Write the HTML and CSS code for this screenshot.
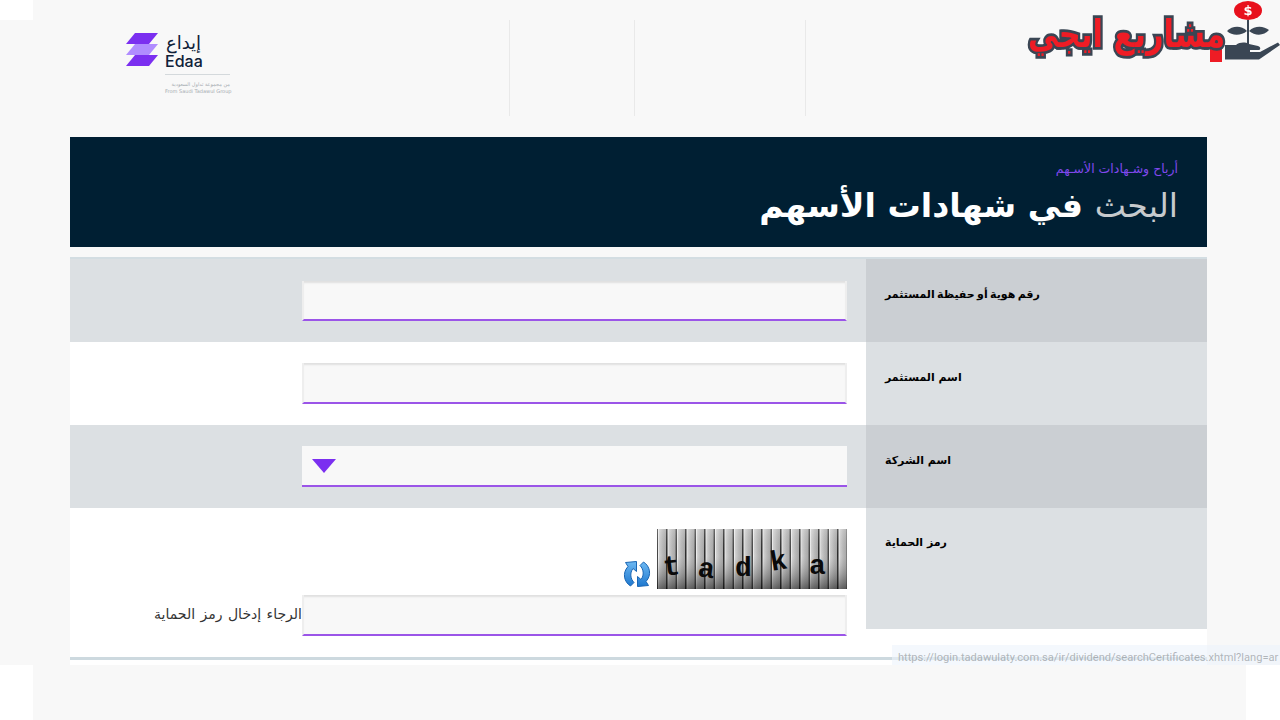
FILE: index.html
```html
<!DOCTYPE html>
<html lang="ar">
<head>
    <meta charset="UTF-8">
    <meta name="viewport" content="width=device-width, initial-scale=1.0">
    <title>البحث في شهادات الأسهم</title>
    <link rel="stylesheet" href="styles.css">
</head>
<body>
    <div class="top-strip"></div>

    <main class="page">
        <header class="header">
            <div class="edaa-logo">
                <svg class="edaa-mark" width="32" height="34" viewBox="0 0 32 34">
                    <polygon points="0,11 9,0 32,0 23,11" fill="#7b2ff0"/>
                    <polygon points="0,22 9,11 32,11 23,22" fill="#b08cff"/>
                    <polygon points="0,33 9,22 32,22 23,33" fill="#7b2ff0"/>
                </svg>
                <div class="edaa-text">
                    <div class="edaa-ar">إيداع</div>
                    <div class="edaa-en">Edaa</div>
                    <div class="edaa-group">
                        <div>من مجموعة تداول السعودية</div>
                        <div>From Saudi Tadawul Group</div>
                    </div>
                </div>
            </div>
            <nav class="nav">
                <div class="nav-item nav-first"></div>
                <div class="nav-item nav-second"></div>
            </nav>
        </header>

        <div class="site-logo">
            <span class="site-logo-block"></span>
            <span class="site-logo-text">مشاريع ايجي</span>
            <svg class="site-logo-icon" width="58" height="62" viewBox="0 0 58 62">
                <ellipse cx="26" cy="10.5" rx="14" ry="9.5" fill="#e8101c"/>
                <text x="26" y="15" class="dollar">$</text>
                <path d="M26 20V44" stroke="#3a4654" stroke-width="2"/>
                <path d="M25 31C19 25 10 26 5 31C10 36 19 36 25 31Z" fill="#3a4654"/>
                <path d="M27 31C33 25 42 26 47 30C42 36 33 36 27 31Z" fill="#3a4654"/>
                <path d="M3 45L14 45C18 42 23 42 27 44L36 46C39 47 39 50 36 50L28 50L28 52L38 52L56 42.5L58 45L37 59.5H3Z" fill="#3a4654"/>
            </svg>
        </div>

        <section class="banner">
            <div class="banner-sub">أرباح وشـهادات الأسـهم</div>
            <h1 class="banner-title"><span class="light">البحث</span> في شهادات الأسهم</h1>
        </section>

        <section class="form">
            <div class="row row-dark">
                <div class="label label-long">رقم هوية أو حفيظة المستثمر</div>
                <div class="field"><input class="input" type="text"></div>
            </div>
            <div class="row">
                <div class="label">اسم المستثمر</div>
                <div class="field field-tall"><input class="input" type="text"></div>
            </div>
            <div class="row row-dark">
                <div class="label">اسم الشركة</div>
                <div class="field field-tall">
                    <div class="select"><span class="select-arrow"></span></div>
                </div>
            </div>
            <div class="row row-captcha">
                <div class="label">رمز الحماية</div>
                <div class="field field-tall">
                    <div class="captcha-line">
                        <svg class="captcha" width="190" height="60" viewBox="0 0 190 60">
                            <defs>
                                <linearGradient id="stripes" x1="0" x2="0.05" y1="0" y2="0" spreadMethod="repeat">
                                    <stop offset="0" stop-color="#2c2c2c"/>
                                    <stop offset="0.09" stop-color="#555"/>
                                    <stop offset="0.14" stop-color="#f2f2f2"/>
                                    <stop offset="0.26" stop-color="#d0d0d0"/>
                                    <stop offset="0.6" stop-color="#b8b8b8"/>
                                    <stop offset="0.92" stop-color="#a8a8a8"/>
                                    <stop offset="1" stop-color="#2c2c2c"/>
                                </linearGradient>
                                <linearGradient id="shade" x1="0" x2="0" y1="0" y2="1">
                                    <stop offset="0" stop-color="#fff" stop-opacity=".2"/>
                                    <stop offset="0.45" stop-color="#888" stop-opacity="0"/>
                                    <stop offset="1" stop-color="#000" stop-opacity=".5"/>
                                </linearGradient>
                            </defs>
                            <rect width="190" height="60" fill="url(#stripes)"/>
                            <rect width="190" height="60" fill="url(#shade)"/>
                            <text x="6" y="46" class="captcha-char" transform="rotate(-6 14 36)">t</text>
                            <text x="41" y="48" class="captcha-char" transform="rotate(8 48 40)">a</text>
                            <text x="78" y="47" class="captcha-char">d</text>
                            <text x="113" y="41" class="captcha-char" transform="rotate(-10 120 32)">k</text>
                            <text x="152" y="45" class="captcha-char">a</text>
                        </svg>
                        <svg class="refresh" width="28" height="28" viewBox="0 0 28 28">
                            <defs>
                                <linearGradient id="arrowBlue" x1="0" x2="0" y1="0" y2="1">
                                    <stop offset="0" stop-color="#6db8f2"/>
                                    <stop offset="1" stop-color="#1e78cf"/>
                                </linearGradient>
                            </defs>
                            <path d="M7.5 26C1 22-1 13 5 6.5L2.5 2.5L13.5 1.5L13.5 11.5L10 8.5C6.5 13 7.5 19 11 22.5Z" fill="url(#arrowBlue)" stroke="#1a66b4"/>
                            <path d="M20.5 2C27 6 29 15 23 21.5L25.5 25.5L14.5 26.5L14.5 16.5L18 19.5C21.5 15 20.5 9 17 5.5Z" fill="url(#arrowBlue)" stroke="#1a66b4"/>
                        </svg>
                    </div>
                    <div class="input-line">
                        <input class="input" type="text">
                        <span class="error">الرجاء إدخال رمز الحماية</span>
                    </div>
                </div>
            </div>
        </section>

        <div class="status-url">https://login.tadawulaty.com.sa/ir/dividend/searchCertificates.xhtml?lang=ar</div>
    </main>

    <div class="bottom-strip"></div>
</body>
</html>
```

FILE: styles.css
```css
* {
    margin: 0;
    padding: 0;
    box-sizing: border-box;
}

html, body {
    height: 720px;
    overflow: hidden;
}

body {
    background: #fff;
    font-family: "DejaVu Sans", sans-serif;
}

.top-strip {
    height: 20px;
    margin-left: 33px;
    background: #f8f8f8;
}

.bottom-strip {
    height: 55px;
    margin: 0 34px 0 33px;
    background: #f8f8f8;
}

.page {
    position: relative;
    height: 645px;
    background: #f8f8f8;
}

/* header */
.header {
    display: flex;
    height: 117px;
    padding-left: 126px;
}

.edaa-logo {
    display: flex;
    gap: 7px;
    width: 383px;
    padding-top: 13px;
}

.edaa-ar {
    font-size: 18px;
    line-height: 19px;
    color: #0f2138;
    width: 37px;
    text-align: center;
}

.edaa-en {
    margin-top: 2px;
    font-family: "Inter", sans-serif;
    font-size: 16px;
    font-weight: 500;
    line-height: 15px;
    color: #0f2138;
}

.edaa-group {
    width: 65px;
    margin-top: 5px;
    padding-top: 6px;
    border-top: 1px solid #d4d9dc;
    font-size: 5px;
    line-height: 7px;
    color: #a5abb0;
    white-space: nowrap;
}

.edaa-group div:first-child {
    direction: rtl;
}

.nav {
    display: flex;
    height: 96px;
}

.nav-item {
    border-left: 1px solid #e9e9e9;
}

.nav-first {
    width: 125px;
}

.nav-second {
    width: 172px;
    border-right: 1px solid #e9e9e9;
}

/* logo over the corner of the header */
.site-logo {
    position: absolute;
    top: -20px;
    right: 0;
    display: flex;
    align-items: flex-start;
    filter: blur(0.4px);
}

.site-logo-text {
    margin-top: 7px;
    margin-right: -3px;
    font-size: 34px;
    font-weight: bold;
    line-height: 54px;
    color: #ee1c25;
    -webkit-text-stroke: 5px #3a4654;
    paint-order: stroke fill;
    white-space: nowrap;
    transform: scale(0.9, 1.12);
    transform-origin: right center;
}

.site-logo-block {
    position: absolute;
    top: 45px;
    right: 58px;
    width: 12px;
    height: 17px;
    background: #ee1c25;
}

.dollar {
    font-size: 13px;
    font-weight: bold;
    fill: #fff;
    text-anchor: middle;
}

/* banner */
.banner {
    margin: 0 73px 0 70px;
    height: 110px;
    padding: 23px 29px 0;
    background: #001f33;
    direction: rtl;
}

.banner-sub {
    font-size: 12.5px;
    line-height: 18px;
    color: #8048ee;
}

.banner-title {
    margin-top: 7px;
    font-size: 33.2px;
    font-weight: bold;
    line-height: 42px;
    color: #fff;
}

.banner-title .light {
    font-weight: normal;
    color: #c6cacd;
}

/* form */
.form {
    margin: 10px 73px 0 70px;
    height: 408px;
    padding-bottom: 5px;
    background: #fff;
    border-top: 2px solid #d3dde2;
    direction: rtl;
}

.form::after {
    content: "";
    display: block;
    height: 3px;
    margin-top: 28px;
    background: #cdd9df;
}

.row {
    display: flex;
    height: 83px;
}

.row-dark {
    background: #dce0e3;
}

.label {
    width: 341px;
    flex-shrink: 0;
    padding: 27px 19px 0;
    background: #dce0e3;
    font-size: 11px;
    font-weight: bold;
    line-height: 18px;
    color: #000;
    text-align: left;
}

.label-long {
    word-spacing: -1.5px;
}

.row-dark .label {
    background: #cbcfd3;
}

.field {
    flex: 1;
    padding: 22px 19px 0 0;
}

.field-tall {
    padding-top: 21px;
}

.input {
    display: block;
    width: 545px;
    height: 40px;
    background: #f8f8f8;
    border: 0;
    border-right: 2px solid #eee;
    border-left: 2px solid #eee;
    border-bottom: 2px solid #9b55e8;
    box-shadow: inset 0 3px 2px -1px #e0e0e0;
}

.field-tall .input {
    height: 41px;
}

.select {
    display: flex;
    justify-content: flex-end;
    align-items: center;
    width: 545px;
    height: 41px;
    padding-left: 10px;
    background: #f8f8f8;
    border-bottom: 2px solid #9b55e8;
}

.select-arrow {
    width: 0;
    height: 0;
    border-top: 14px solid #7b2ff0;
    border-left: 12.5px solid transparent;
    border-right: 12.5px solid transparent;
}

.row-captcha {
    height: 121px;
}

.row-captcha .label {
    padding-top: 26px;
}

.captcha-line {
    display: flex;
    align-items: flex-end;
    gap: 6px;
}

.captcha {
    display: block;
}

.captcha-char {
    font-family: "Liberation Mono", monospace;
    font-size: 28px;
    font-weight: bold;
    fill: #0a0a0a;
    direction: ltr;
}

.refresh {
    display: block;
    margin-bottom: 1px;
}

.input-line {
    display: flex;
    align-items: center;
    margin-top: 6px;
}

.error {
    margin-bottom: 3px;
    font-size: 14px;
    word-spacing: 1px;
    color: #333;
    white-space: nowrap;
}

/* browser link preview over the page corner */
.status-url {
    position: absolute;
    top: 625px;
    left: 892px;
    right: 0;
    height: 20px;
    padding-left: 6px;
    overflow: hidden;
    background: rgba(236, 243, 251, 0.6);
    font-family: "Roboto", sans-serif;
    font-size: 11.1px;
    line-height: 26px;
    color: rgba(120, 125, 130, 0.55);
    white-space: nowrap;
}
```
